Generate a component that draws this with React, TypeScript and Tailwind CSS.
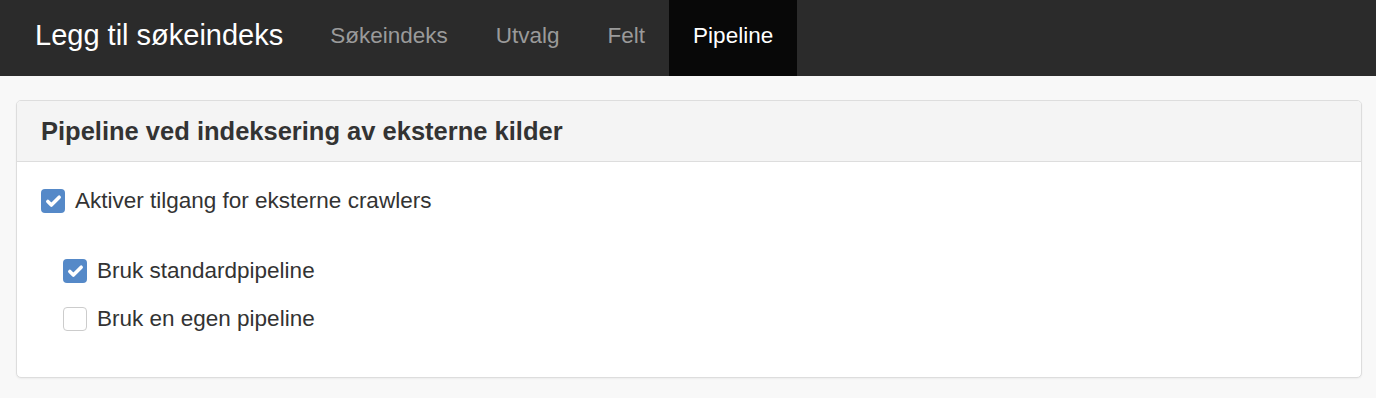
import { Check } from 'lucide-react'

const tabs = [
  { name: 'Søkeindeks', active: false },
  { name: 'Utvalg', active: false },
  { name: 'Felt', active: false },
  { name: 'Pipeline', active: true },
]

function Checkbox({ checked, label }: { checked: boolean; label: string }) {
  return (
    <label className="flex h-[24px] items-center gap-[10px] text-[22.5px] leading-none text-[#333]">
      <span
        className={
          checked
            ? 'flex h-[24px] w-[24px] shrink-0 items-center justify-center rounded-[4px] bg-[#5589c8]'
            : 'flex h-[24px] w-[24px] shrink-0 items-center justify-center rounded-[4px] border border-[#ccc] bg-white'
        }
      >
        {checked && <Check className="h-[17px] w-[17px] text-white" strokeWidth={5} />}
      </span>
      {label}
    </label>
  )
}

export default function App() {
  return (
    <div className="min-h-[398px] bg-[#f8f8f8] font-['Liberation_Sans',Arial,sans-serif]">
      {/* top bar */}
      <header className="flex h-[76px] items-stretch bg-[#2b2b2b]">
        <div className="flex items-center pb-[4px] pl-[35px] pr-[23px] text-[29px] text-white">Legg til søkeindeks</div>
        <nav className="flex items-stretch">
          {tabs.map((t) => (
            <div
              key={t.name}
              className={
                t.active
                  ? 'flex items-center bg-[#080808] px-6 pb-[4px] text-[22.5px] text-white'
                  : 'flex items-center px-6 pb-[4px] text-[22.5px] text-[#9a9a9a]'
              }
            >
              {t.name}
            </div>
          ))}
        </nav>
      </header>

      <div className="pl-4 pr-[14px] pt-[24px] pb-5">
        <div className="overflow-hidden rounded-[5px] border border-[#ddd] bg-white shadow-[0_1px_2px_rgba(0,0,0,0.05)]">
          <div className="flex h-[61px] items-center border-b border-[#ddd] bg-[#f4f4f4] px-6">
            <h2 className="text-[25.5px] font-bold text-[#333]">Pipeline ved indeksering av eksterne kilder</h2>
          </div>
          <div className="px-6 pt-[27px] pb-[46px]">
            <Checkbox checked label="Aktiver tilgang for eksterne crawlers" />
            <div className="mt-[46px] flex flex-col gap-[24px] pl-[22px]">
              <Checkbox checked label="Bruk standardpipeline" />
              <Checkbox checked={false} label="Bruk en egen pipeline" />
            </div>
          </div>
        </div>
      </div>
    </div>
  )
}
